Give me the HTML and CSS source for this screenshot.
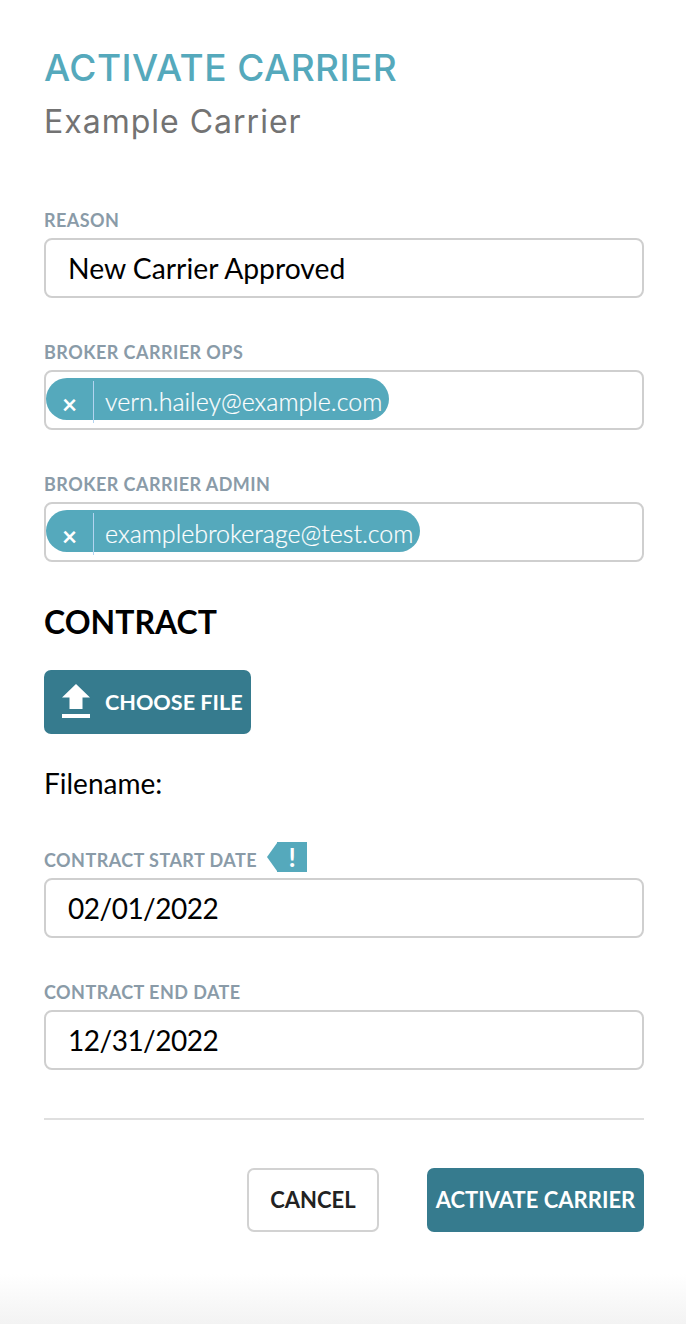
FILE: index.html
```html
<!DOCTYPE html>
<html lang="en">
<head>
<meta charset="utf-8">
<title>Activate Carrier</title>
<link rel="stylesheet" href="styles.css">
</head>
<body>
<main class="modal">
  <h1 class="title">ACTIVATE CARRIER</h1>
  <h2 class="subtitle">Example Carrier</h2>
  <div class="field first">
    <div class="label">REASON</div>
    <div class="input">New Carrier Approved</div>
  </div>
  <div class="field">
    <div class="label">BROKER CARRIER OPS</div>
    <div class="input tags">
      <span class="tag"><span class="tag-x">×</span><span class="tag-text">vern.hailey@example.com</span></span>
    </div>
  </div>
  <div class="field">
    <div class="label">BROKER CARRIER ADMIN</div>
    <div class="input tags">
      <span class="tag"><span class="tag-x">×</span><span class="tag-text">examplebrokerage@test.com</span></span>
    </div>
  </div>
  <h3 class="section">CONTRACT</h3>
  <button class="btn primary choose" type="button">
    <svg class="upload" viewBox="0 0 28 34" width="28" height="34" aria-hidden="true"><path d="M14 0 L28 13.5 H20.5 V25 H7.5 V13.5 H0 Z" fill="#fff"/><rect x="0" y="30" width="28" height="4" fill="#fff"/></svg>
    <span>CHOOSE FILE</span>
  </button>
  <p class="filename">Filename:</p>
  <div class="field start">
    <div class="label">CONTRACT START DATE<span class="flag">!</span></div>
    <div class="input date">02/01/2022</div>
  </div>
  <div class="field">
    <div class="label">CONTRACT END DATE</div>
    <div class="input date">12/31/2022</div>
  </div>
  <hr class="rule">
  <div class="actions">
    <button class="btn ghost" type="button">CANCEL</button>
    <button class="btn primary activate" type="button">ACTIVATE CARRIER</button>
  </div>
</main>
<div class="fade"></div>
</body>
</html>
```
FILE: styles.css
```css
* { box-sizing: border-box; }
html, body { margin: 0; padding: 0; height: 1324px; overflow: hidden; background: #fff; }
body { position: relative; font-family: Lato, "Liberation Sans", sans-serif; color: #000; }
.modal { padding: 44px 42px 0 44px; }
.title { margin: 0; height: 48px; font-family: Inter, "Open Sans", sans-serif; font-weight: 500; font-size: 37px; letter-spacing: 0.45px; line-height: 48px; color: #55a9bc; white-space: nowrap; }
.subtitle { margin: 12px 0 0; height: 36px; font-family: Inter, "Open Sans", sans-serif; font-weight: 400; font-size: 32px; letter-spacing: 1px; line-height: 36px; color: #737373; white-space: nowrap; }
.field { margin-top: 45px; }
.field.first { margin-top: 71px; }
.field.start { margin-top: 48px; }
.label { display: flex; align-items: center; height: 18px; margin-bottom: 9px; font-size: 18px; letter-spacing: 0.45px; line-height: 18px; font-weight: 700; color: #8a9ba8; white-space: pre; }
.input { display: flex; align-items: center; height: 60px; padding-left: 22px; border: 2px solid #cfcfcf; border-radius: 8px; font-size: 28.3px; background: #fff; }
.input.tags { padding-left: 0; }
.input.date { font-size: 28px; letter-spacing: -0.5px; }
.tag { display: inline-flex; align-items: stretch; height: 42px; margin-bottom: 2px; border-radius: 21px; background: #55a9bc; color: #fff; font-size: 25px; letter-spacing: 0; font-weight: 300; }
.tag-x { display: flex; align-items: center; justify-content: center; width: 48px; height: 42px; margin-top: 3px; padding-top: 4px; border-right: 1px solid #b3d4f0; font-size: 26px; font-weight: 700; }
.tag-text { padding: 2px 7px 0 11px; line-height: 42px; -webkit-text-stroke: 0.2px #fff; }
.section { margin: 40px 0 0; height: 40px; font-size: 32px; line-height: 40px; font-weight: 700; color: #000; }
.btn { display: inline-flex; align-items: center; justify-content: center; height: 64px; border-radius: 7px; font-family: Lato, "Liberation Sans", sans-serif; font-size: 22px; font-weight: 700; cursor: pointer; padding: 0; white-space: nowrap; }
.primary { background: #367b8e; border: 0; color: #fff; }
.ghost { width: 132px; background: #fff; border: 2px solid #d2d2d2; color: #222; }
.choose { justify-content: flex-start; width: 207px; margin-top: 28px; padding-left: 18px; gap: 15px; font-size: 21.6px; }
.upload { display: block; margin-bottom: 2px; }
.filename { margin: 29px 0 0; height: 40px; font-size: 28px; line-height: 40px; }
.flag { position: relative; display: block; flex: none; width: 30px; height: 30px; margin: -6px 0 0 20px; background: #55a9bc; color: #fff; font-size: 26px; letter-spacing: 0; line-height: 30px; text-align: center; }
.flag::before { content: ""; position: absolute; left: -10px; top: 1px; border-style: solid; border-width: 14px 10px 14px 0; border-color: transparent #55a9bc transparent transparent; }
.rule { margin: 48px 0 0; height: 2px; border: 0; background: #dfdfdf; }
.actions { display: flex; justify-content: flex-end; gap: 48px; margin-top: 48px; }
.actions .btn { padding-bottom: 2px; }
.activate { width: 217px; }
.fade { position: absolute; left: 0; right: 0; bottom: 0; height: 50px; background: linear-gradient(#fff, #f3f3f3); }
```
